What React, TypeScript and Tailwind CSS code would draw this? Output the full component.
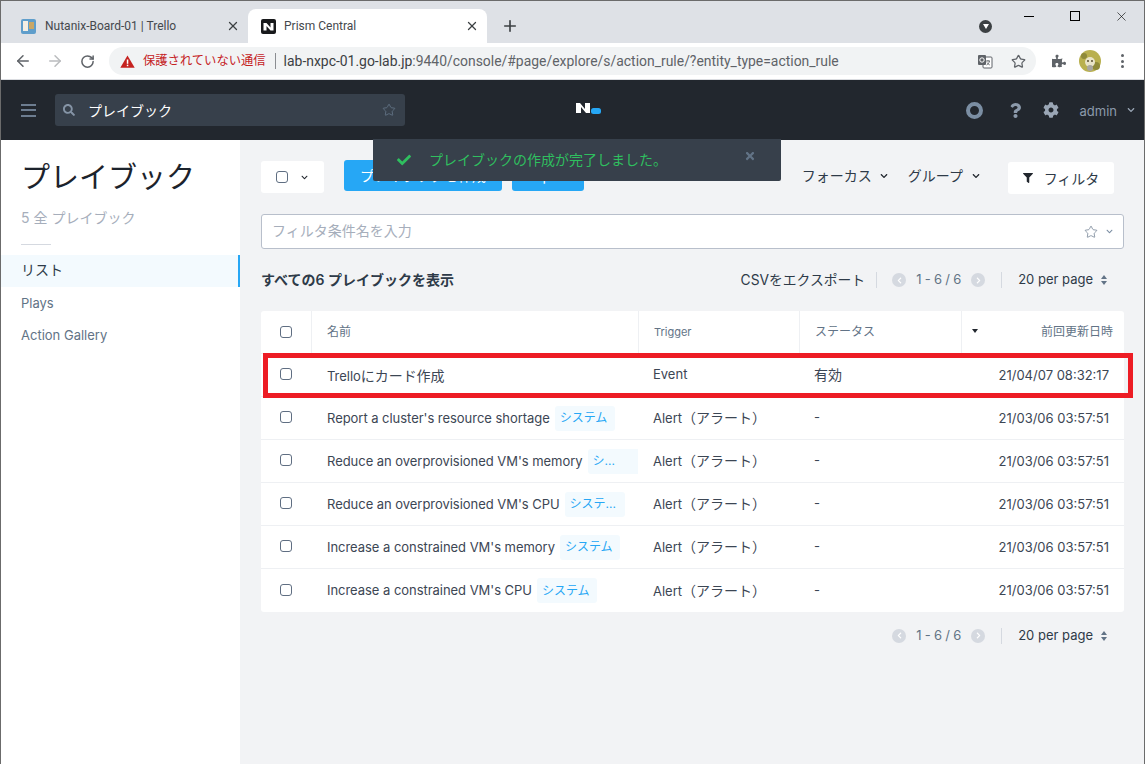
import React from "react";
import { ArrowLeft, ArrowRight, RotateCw, Star, X, Plus } from "lucide-react";
import { FaCog, FaFilter, FaCheck, FaTimes, FaSearch, FaPuzzlePiece, FaQuestion, FaChevronLeft, FaChevronRight, FaChevronDown } from "react-icons/fa";

const sans = "font-['Inter','Noto_Sans_CJK_JP',sans-serif]";
const chrome = "font-['Roboto','Noto_Sans_CJK_JP',sans-serif]";

function Box() {
  return <span className="block w-[12px] h-[12px] rounded-[3px] border border-[#5f6e82] bg-white" />;
}

function Caret({ className = "" }: { className?: string }) {
  return <FaChevronDown className={"text-[7px] text-[#3c4654] " + className} />;
}

function Pager() {
  return (
    <div className="flex items-center text-[13px] text-[#627386]">
      <span className="w-[14px] h-[14px] rounded-full bg-[#d5d9e0] flex items-center justify-center"><FaChevronLeft className="text-[7px] text-white" /></span>
      <span className="w-[65px] text-center tracking-[-0.2px]">1 - 6 / 6</span>
      <span className="w-[14px] h-[14px] rounded-full bg-[#d5d9e0] flex items-center justify-center"><FaChevronRight className="text-[7px] text-white" /></span>
      <span className="w-[1px] h-[16px] bg-[#d5d9e0] mx-[16px]" />
      <span className="text-[#2e3a48]">20 per page</span>
      <span className="ml-[8px] flex flex-col items-center gap-[2px]">
        <span className="w-0 h-0 border-x-[3px] border-x-transparent border-b-[4px] border-b-[#627386]" />
        <span className="w-0 h-0 border-x-[3px] border-x-transparent border-t-[4px] border-t-[#627386]" />
      </span>
    </div>
  );
}

const cjk = "text-[14px]";
const alert = <>Alert<span className={cjk}>（アラート）</span></>;

const rows: { id: number; name: React.ReactNode; tag?: string; trigger: React.ReactNode; status: React.ReactNode; date: string }[] = [
  { id: 1, name: <>Trello<span className={cjk}>にカード作成</span></>, trigger: "Event", status: <span className={cjk}>有効</span>, date: "21/04/07 08:32:17" },
  { id: 2, name: "Report a cluster's resource shortage", tag: "システム", trigger: alert, status: "-", date: "21/03/06 03:57:51" },
  { id: 3, name: "Reduce an overprovisioned VM's memory", tag: "シ...", trigger: alert, status: "-", date: "21/03/06 03:57:51" },
  { id: 4, name: "Reduce an overprovisioned VM's CPU", tag: "システ...", trigger: alert, status: "-", date: "21/03/06 03:57:51" },
  { id: 5, name: "Increase a constrained VM's memory", tag: "システム", trigger: alert, status: "-", date: "21/03/06 03:57:51" },
  { id: 6, name: "Increase a constrained VM's CPU", tag: "システム", trigger: alert, status: "-", date: "21/03/06 03:57:51" },
];

function TranslateIcon() {
  return (
    <svg width="16" height="15" viewBox="0 0 16 15" className="mr-[18px] shrink-0">
      <rect x="6" y="3" width="9" height="11" rx="1" fill="#fff" stroke="#5f6368" />
      <rect x="1" y="1" width="8" height="10" rx="1" fill="#5f6368" />
      <circle cx="5" cy="6" r="2.2" fill="none" stroke="#fff" strokeWidth="1" />
      <path d="M9 7h4M11 6v1M12.5 7c-.4 2-1.6 3.5-3 4M10 8.5c.6 1 1.500 2 2.800 2.500" fill="none" stroke="#5f6368" strokeWidth="0.9" />
    </svg>
  );
}

function BrowserChrome() {
  return (
    <div className={chrome}>
      <div className="h-[43px] bg-[#dee1e6] flex items-end pl-[7px] border-t border-t-[#6b6b6b]">
        <div className="w-[240px] h-[34px] flex items-center pl-[13px] pr-[8px] text-[12px] text-[#45484d]">
          <span className="w-[15px] h-[15px] rounded-[2px] bg-[#5f9ecb] flex items-center justify-center gap-[1px] mr-[9px]">
            <span className="w-[5px] h-[10px] bg-[#f4efe4]" /><span className="w-[5px] h-[7px] bg-[#c9a766] self-start mt-[3px]" />
          </span>
          <span className="flex-1">Nutanix-Board-01 | Trello</span>
          <X size={14} strokeWidth={2.2} className="text-[#3c4043]" />
        </div>
        <div className="w-[239px] h-[34px] bg-white rounded-t-[8px] flex items-center pl-[13px] pr-[8px] text-[12px] text-[#45484d]">
          <svg width="15" height="15" viewBox="0 0 15 15" className="mr-[8px] shrink-0">
            <rect width="15" height="15" rx="2" fill="#18191b" />
            <path d="M2.500 4h3l4 4.500V4h3v7.500h-3l-4-4.500v4.500h-3z" fill="#fff" />
          </svg>
          <span className="flex-1">Prism Central</span>
          <X size={14} strokeWidth={2.2} className="text-[#3c4043]" />
        </div>
        <Plus size={18} strokeWidth={2.2} className="text-[#3c4043] ml-[14px] mb-[8px]" />
        <div className="flex-1" />
        <span className="w-[13px] h-[13px] rounded-full bg-[#3c4043] flex items-center justify-center mb-[10px] mr-[14px]">
          <span className="w-0 h-0 border-x-[3.5px] border-x-transparent border-t-[5px] border-t-white" />
        </span>
        <div className="self-start flex items-center h-[30px]">
          <div className="w-[46px] flex justify-center"><span className="w-[10px] h-px bg-black" /></div>
          <div className="w-[46px] flex justify-center"><span className="w-[10px] h-[10px] border border-black" /></div>
          <div className="w-[46px] flex justify-center"><X size={15} strokeWidth={1} className="text-black" /></div>
        </div>
      </div>
      <div className="h-[37px] bg-white flex items-center pl-[13px] border-b border-b-[#dadce0]">
        <ArrowLeft size={18} strokeWidth={2} className="text-[#5f6368]" />
        <ArrowRight size={18} strokeWidth={2} className="text-[#babcbe] ml-[14px]" />
        <RotateCw size={15} strokeWidth={2.4} className="text-[#5f6368] ml-[16px]" />
        <div className="ml-[14px] w-[927px] h-[28px] rounded-full bg-[#f1f3f4] flex items-center pl-[11px] pr-[10px] text-[#5f6368]">
          <svg width="15" height="13" viewBox="0 0 15 13" className="mr-[8px] shrink-0">
            <path d="M7.500 0.500L14.700 12.700H0.300z" fill="#c5221f" />
            <rect x="6.800" y="4.500" width="1.500" height="4.300" fill="#fff" />
            <rect x="6.800" y="9.700" width="1.500" height="1.500" fill="#fff" />
          </svg>
          <span className="text-[#c5221f] text-[12.3px]">保護されていない通信</span>
          <span className="w-px h-[16px] bg-[#8a8d91] ml-[9px] mr-[8px]" />
          <span className="text-[13.93px] flex-1 whitespace-nowrap"><span className="text-[#3c4043]">lab-nxpc-01.go-lab.jp</span>:9440/console/#page/explore/s/action_rule/?entity_type=action_rule</span>
          <TranslateIcon />
          <Star size={15} strokeWidth={2} className="text-[#5f6368]" />
        </div>
        <FaPuzzlePiece className="text-[14px] text-[#5f6368] ml-[16px]" />
        <svg width="22" height="22" viewBox="0 0 22 22" className="ml-[13px] shrink-0">
          <circle cx="11" cy="11" r="11" fill="#b9b04f" />
          <circle cx="5" cy="6" r="3" fill="#8f8a3a" />
          <circle cx="17" cy="16" r="4" fill="#8f8a3a" />
          <circle cx="11" cy="12" r="5" fill="#e9e4c8" />
          <circle cx="11" cy="18" r="3" fill="#a8a6a0" />
          <circle cx="9" cy="11" r="0.9" fill="#4a3f20" />
          <circle cx="13" cy="11" r="0.9" fill="#4a3f20" />
        </svg>
        <span className="ml-[20px] flex flex-col gap-[2.500px]">
          <span className="w-[3px] h-[3px] rounded-full bg-[#5f6368]" /><span className="w-[3px] h-[3px] rounded-full bg-[#5f6368]" /><span className="w-[3px] h-[3px] rounded-full bg-[#5f6368]" />
        </span>
      </div>
    </div>
  );
}

function AppHeader() {
  return (
    <div className="h-[60px] bg-[#22272e] flex items-center pl-[20px]">
      <div className="flex flex-col gap-[3.5px] w-[15px]">
        <span className="h-[2px] bg-[#6d7d90]" /><span className="h-[2px] bg-[#6d7d90]" /><span className="h-[2px] bg-[#6d7d90]" />
      </div>
      <div className="ml-[19px] w-[350px] h-[32px] rounded-[3px] bg-[#37404b] flex items-center pl-[8px] pr-[9px]">
        <FaSearch className="text-[12px] text-[#8594a6]" />
        <span className="ml-[13px] flex-1 text-[14px] text-white">プレイブック</span>
        <Star size={14} strokeWidth={1.5} className="text-[#627386]" />
      </div>
      <svg width="26" height="13" viewBox="0 0 26 13" className="ml-[171px] -mt-[4px] shrink-0">
        <path d="M0 1h4l5 6V1h5v10h-4L5 5v6H0z" fill="#fff" />
        <rect x="15" y="6" width="10" height="6" rx="2.500" fill="#26a7f5" />
      </svg>
      <div className="flex-1" />
      <span className="w-[17px] h-[17px] rounded-full border-[4px] border-[#7b8ea3]" />
      <FaQuestion className="ml-[25px] text-[15px] text-[#8c9aab]" />
      <FaCog className="ml-[20px] text-[16px] text-[#9aa6b5]" />
      <span className="ml-[21px] mt-[3px] text-[13px] text-[#8c9aab]">admin</span>
      <FaChevronDown className="ml-[10px] mr-[9px] text-[8px] text-[#9aa6b5]" />
    </div>
  );
}

function Sidebar() {
  return (
    <aside className="w-[239px] shrink-0 bg-white pt-[17px]">
      <div className="pl-[20px] text-[29px] leading-[41px] text-[#1c232c]">プレイブック</div>
      <div className="pl-[20px] mt-[10px] text-[14px] leading-[20px] text-[#a6aebb]">5 全 プレイブック</div>
      <div className="ml-[20px] mt-[16px] w-[30px] h-px bg-[#d5d9e0]" />
      <div className="mt-[10px] h-[32px] bg-[#f3fafe] border-r-[2px] border-r-[#26a7f5] pl-[20px] flex items-center text-[14px] text-[#2e3a48]"><span className="-mt-[3px]">リスト</span></div>
      <div className="h-[32px] pl-[20px] pt-[2px] flex items-center text-[13px] text-[#627386]">Plays</div>
      <div className="h-[32px] pl-[20px] pt-[2px] flex items-center text-[13px] text-[#627386]">Action Gallery</div>
    </aside>
  );
}

function Table() {
  return (
    <div className="mt-[20px] bg-white rounded-[3px]">
      <div className="flex h-[43px] border-b border-b-[#eef0f3] text-[12px] text-[#627386] items-stretch">
        <div className="w-[51px] border-r border-r-[#eef0f3] flex items-center justify-center"><Box /></div>
        <div className="w-[327px] border-r border-r-[#eef0f3] pl-[15px] flex items-center">名前</div>
        <div className="w-[161px] border-r border-r-[#eef0f3] pl-[15px] flex items-center text-[11px]">Trigger</div>
        <div className="w-[162px] border-r border-r-[#eef0f3] pl-[15px] flex items-center">ステータス</div>
        <div className="flex-1 pr-[11px] pl-[10px] flex items-center justify-between">
          <span className="w-0 h-0 border-x-[3px] border-x-transparent border-t-[4px] border-t-[#22272e] -mt-[3px]" />
          <span>前回更新日時</span>
        </div>
      </div>
      {rows.map((r) => (
        <div key={r.id} className="flex h-[43px] border-b border-b-[#eef0f3] last:border-b-0 items-center text-[13px] text-[#3c4654]">
          <div className="w-[50px] flex justify-center -mt-[2px]"><Box /></div>
          <div className="w-[327px] pl-[16px] flex items-center whitespace-nowrap overflow-hidden">
            <span className="tracking-[-0.04px] pt-[1px]">{r.name}</span>
            {r.tag && <span className="ml-[5px] w-[60px] h-[25px] rounded-[3px] bg-[#f3fafe] px-[5px] flex items-center text-[12px] text-[#26a7f5] shrink-0">{r.tag}</span>}
          </div>
          <div className="w-[161px] pl-[15px]">{r.trigger}</div>
          <div className="w-[162px] pl-[15px]">{r.status}</div>
          <div className="flex-1 pr-[15px] pt-[1px] text-right">{r.date}</div>
        </div>
      ))}
    </div>
  );
}

function Main() {
  return (
    <main className="flex-1 bg-[#f2f3f5] pl-[21px] pr-[20px] pt-[22px] relative">
      <div className="flex items-center h-[32px] pr-[10px]">
        <div className="w-[63px] h-[32px] -mt-[2px] bg-white rounded-[3px] flex items-center pl-[15px] gap-[13px]"><Box /><Caret className="text-[#22272e]" /></div>
        <div className="ml-[20px] w-[158px] h-[31px] -mt-[5px] bg-[#26a7f5] rounded-[3px] text-white text-[14px] flex items-center justify-center">プレイブックを作成</div>
        <div className="ml-[10px] w-[72px] h-[31px] -mt-[5px] bg-[#26a7f5] rounded-[3px] text-white text-[14px] flex items-center justify-center">Import</div>
        <div className="flex-1" />
        <span className="text-[14px] text-[#2e3a48] mb-[6px]">フォーカス</span>
        <Caret className="ml-[8px] mr-[20px] text-[8px] text-[#22272e] mb-[4px]" />
        <span className="text-[14px] text-[#2e3a48] mb-[6px]">グループ</span>
        <Caret className="ml-[9px] mr-[28px] text-[8px] text-[#22272e] mb-[4px]" />
        <div className="w-[106px] h-[32px] bg-white rounded-[3px] flex items-center justify-center text-[14px] text-[#2e3a48] gap-[11px]"><FaFilter className="text-[10px] text-[#22272e]" />フィルタ</div>
      </div>
      <div className="mt-[20px] h-[35px] bg-white border border-[#b8bfcb] rounded-[3px] flex items-center pl-[10px] pr-[10px] text-[14px] text-[#a6aebb]">
        <span className="flex-1 -mt-[2px]">フィルタ条件名を入力</span>
        <Star size={14} strokeWidth={1.2} className="text-[#627386]" />
        <Caret className="ml-[8px] text-[#7b8ea3]" />
      </div>
      <div className="mt-[20px] h-[22px] flex items-center pr-[17px]">
        <span className="text-[14px] font-semibold text-[#2e3a48] -mt-[2px]">すべての6 プレイブックを表示</span>
        <div className="flex-1" />
        <span className="text-[13.8px] text-[#2e3a48]">CSVをエクスポート</span>
        <span className="w-px h-[16px] bg-[#d5d9e0] ml-[11px] mr-[15px]" />
        <Pager />
      </div>
      <Table />
      <div className="mt-[14px] flex justify-end pr-[17px]"><Pager /></div>

      <div className="absolute left-[133px] -top-[1px] w-[408px] h-[42px] bg-[#37404b] rounded-b-[2px] flex items-center pl-[24px] pr-[25px] text-[14px] text-[#2fbf5f]">
        <FaCheck className="text-[14px] mr-[18px]" />
        <span className="flex-1 -mt-[2px]">プレイブックの作成が完了しました。</span>
        <FaTimes className="text-[12px] text-[#627386] -mt-[8px]" />
      </div>
      <div className="absolute left-[23px] top-[213px] w-[870px] h-[45px] border-[5px] border-[#ed1c24]" />
    </main>
  );
}

export default function App() {
  return (
    <div className={"w-[1145px] h-[764px] overflow-hidden flex flex-col border-x border-x-[#6b6b6b] " + sans}>
      <BrowserChrome />
      <AppHeader />
      <div className="flex-1 flex">
        <Sidebar />
        <Main />
      </div>
    </div>
  );
}
